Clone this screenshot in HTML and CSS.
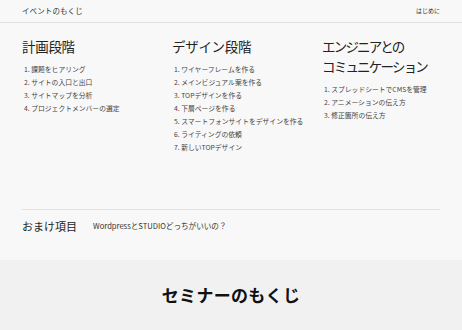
FILE: index.html
```html
<!DOCTYPE html>
<html lang="ja">
<head>
<meta charset="utf-8">
<link rel="stylesheet" href="styles.css">
</head>
<body>
<header class="topbar">
  <div class="brand">イベントのもくじ</div>
  <nav class="nav">はじめに</nav>
</header>
<main class="content">
  <section class="columns">
    <div class="col">
      <h2 class="col-title">計画段階</h2>
      <ol class="steps">
        <li>課題をヒアリング</li>
        <li>サイトの入口と出口</li>
        <li>サイトマップを分析</li>
        <li>プロジェクトメンバーの選定</li>
      </ol>
    </div>
    <div class="col">
      <h2 class="col-title">デザイン段階</h2>
      <ol class="steps">
        <li>ワイヤーフレームを作る</li>
        <li>メインビジュアル案を作る</li>
        <li>TOPデザインを作る</li>
        <li>下層ページを作る</li>
        <li>スマートフォンサイトをデザインを作る</li>
        <li>ライティングの依頼</li>
        <li>新しいTOPデザイン</li>
      </ol>
    </div>
    <div class="col">
      <h2 class="col-title narrow">エンジニアとの<br>コミュニケーション</h2>
      <ol class="steps">
        <li>スプレッドシートでCMSを管理</li>
        <li>アニメーションの伝え方</li>
        <li>修正箇所の伝え方</li>
      </ol>
    </div>
  </section>
  <section class="extra">
    <h2 class="extra-title">おまけ項目</h2>
    <p class="extra-link">WordpressとSTUDIOどっちがいいの？</p>
  </section>
</main>
<section class="seminar">
  <h1 class="seminar-title">セミナーのもくじ</h1>
</section>
</body>
</html>
```
FILE: styles.css
```css
* { box-sizing: border-box; }
html, body { margin: 0; padding: 0; }
body {
  background: #f8f8f8;
  color: #333;
  font-family: "Noto Sans CJK JP", "Noto Sans", sans-serif;
  width: 462px;
  overflow: hidden;
}
.topbar {
  height: 23px;
  border-bottom: 1px solid #e0e0e0;
  display: flex;
  justify-content: space-between;
  align-items: center;
  padding: 0 22px 1px 22px;
}
.brand { font-size: 7.5px; color: #333; letter-spacing: 0.1px; }
.nav { font-size: 6px; color: #333; }
.content { padding: 0 22px; }
.columns {
  display: grid;
  grid-template-columns: 150px 150px 140px;
  padding-top: 13px;
  height: 186px;
}
.col-title {
  margin: 0;
  font-weight: 400;
  font-size: 13.5px;
  line-height: 20px;
  color: #222;
  letter-spacing: -0.3px;
  white-space: nowrap;
}
.col-title.narrow { letter-spacing: -1.8px; }
.steps {
  margin: 7px 0 0 0;
  padding: 0 0 0 2px;
  list-style: none;
  counter-reset: s;
}
.steps li {
  counter-increment: s;
  font-size: 6.8px;
  line-height: 13px;
  color: #444;
  white-space: nowrap;
}
.steps li::before { content: counter(s) ". "; }
.extra {
  border-top: 1px solid #e2e2e2;
  display: flex;
  align-items: center;
  height: 31px;
  padding-top: 1px;
}
.extra-title {
  margin: 0;
  font-weight: 400;
  font-size: 11px;
  color: #222;
  width: 71px;
}
.extra-link {
  margin: 0;
  font-size: 7.6px;
  color: #333;
}
.seminar {
  margin-top: 20px;
  background: #f1f1f1;
  height: 80px;
  display: flex;
  justify-content: center;
  padding-top: 24px;
}
.seminar-title {
  margin: 0;
  font-size: 17px;
  font-weight: 700;
  color: #111;
  line-height: 22px;
  letter-spacing: 0.3px;
}
```
